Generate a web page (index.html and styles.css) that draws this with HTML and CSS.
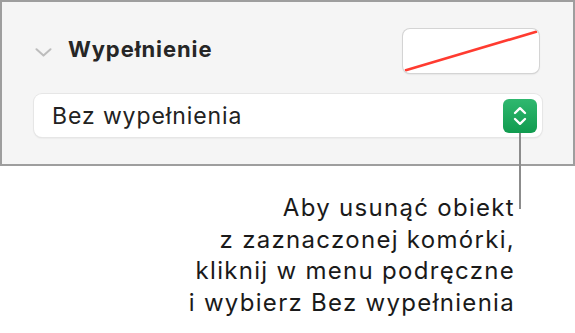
FILE: index.html
```html
<!DOCTYPE html>
<html lang="pl">
<head>
  <meta charset="UTF-8" />
  <meta name="viewport" content="width=device-width, initial-scale=1.0" />
  <title>Wypełnienie</title>
  <link rel="stylesheet" href="styles.css">
</head>
<body>

  <div class="panel">
    <div class="fill-row">
      <svg class="disclosure" width="17" height="9" viewBox="0 0 17 9">
        <path d="M1.5 1.2 L8.5 7.6 L15.5 1.2" fill="none" stroke="#bdbdbd" stroke-width="2" stroke-linecap="round" stroke-linejoin="round" />
      </svg>
      <span class="fill-title">Wypełnienie</span>
      <div class="swatch">
        <svg width="136" height="44" viewBox="0 0 136 44" preserveAspectRatio="none">
          <line x1="2" y1="41.5" x2="134" y2="2.5" stroke="#ff3b30" stroke-width="2.6" />
        </svg>
      </div>
    </div>

    <div class="popup">
      <span class="popup-label">Bez wypełnienia</span>
      <div class="popup-arrows">
        <svg width="16" height="24" viewBox="0 0 16 24">
          <path d="M3 9 L8 4.2 L13 9" fill="none" stroke="#fff" stroke-width="2.4" stroke-linecap="round" stroke-linejoin="round" />
          <path d="M3 15 L8 19.8 L13 15" fill="none" stroke="#fff" stroke-width="2.4" stroke-linecap="round" stroke-linejoin="round" />
        </svg>
      </div>
    </div>
  </div>

  <p class="callout">
    Aby usunąć obiekt<br>
    z zaznaczonej komórki,<br>
    kliknij w menu podręczne<br>
    i wybierz Bez wypełnienia
  </p>

</body>
</html>
```

FILE: styles.css
```css
body {
  margin: 0;
  background: #fff;
  font-family: Inter, "Liberation Sans", Arial, sans-serif;
  color: #1d1d1d;
}
.panel {
  height: 135px;
  padding: 27px 31px 0 32px;
  background-color: #f5f5f5;
  border: 2px solid #9e9e9e;
}
.fill-row {
  display: flex;
  align-items: center;
  height: 44px;
  padding-left: 1px;
}
.disclosure {
  margin-top: 2px;
}
.fill-title {
  margin-left: 16px;
  margin-top: -4px;
  font-size: 22px;
  font-weight: 700;
  letter-spacing: 0.9px;
  color: #262626;
  flex: 1;
}
.swatch {
  width: 136px;
  height: 44px;
  margin-right: 3px;
  background: #fff;
  border-radius: 7px;
  box-shadow: 0 0 0 1px #d4d4d4, 0 1px 2px rgba(0, 0, 0, 0.18);
  overflow: hidden;
}
.swatch svg {
  display: block;
}
.popup {
  display: flex;
  align-items: center;
  justify-content: space-between;
  height: 43px;
  margin-top: 21px;
  padding: 0 5px 0 18px;
  background: #fff;
  border-radius: 8px;
  box-shadow: 0 0 0 1px #e6e6e6, 0 1px 2px rgba(0, 0, 0, 0.12);
}
.popup-label {
  font-size: 23px;
  letter-spacing: 0.9px;
  color: #222;
}
.popup-arrows {
  position: relative;
  display: flex;
  align-items: center;
  justify-content: center;
  width: 34px;
  height: 34px;
  border-radius: 6px;
  background: linear-gradient(to bottom, #2fb86f, #119b4f);
}
.popup-arrows::after {
  content: "";
  position: absolute;
  left: 16px;
  top: 34px;
  width: 2px;
  height: 76px;
  background: #8c8c8c;
}
.callout {
  margin: 26px 60px 0 0;
  font-size: 24px;
  line-height: 31.5px;
  letter-spacing: 1.3px;
  text-align: right;
  color: #1a1a1a;
}
```
